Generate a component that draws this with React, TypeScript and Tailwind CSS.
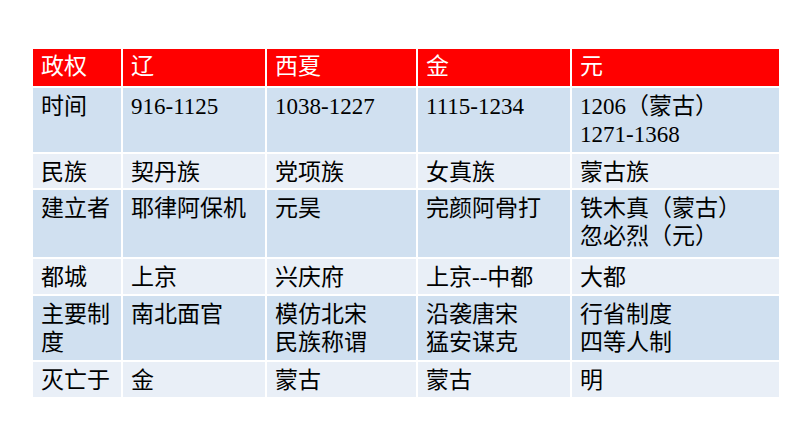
const rows: { bg: string; cells: string[][] }[] = [
  { bg: "bg-[#d0e0f0]", cells: [["时间"], ["916-1125"], ["1038-1227"], ["1115-1234"], ["1206（蒙古）", "1271-1368"]] },
  { bg: "bg-[#e9eff7]", cells: [["民族"], ["契丹族"], ["党项族"], ["女真族"], ["蒙古族"]] },
  { bg: "bg-[#d0e0f0]", cells: [["建立者"], ["耶律阿保机"], ["元昊"], ["完颜阿骨打"], ["铁木真（蒙古）", "忽必烈（元）"]] },
  { bg: "bg-[#e9eff7]", cells: [["都城"], ["上京"], ["兴庆府"], ["上京--中都"], ["大都"]] },
  { bg: "bg-[#d0e0f0]", cells: [["主要制", "度"], ["南北面官"], ["模仿北宋", "民族称谓"], ["沿袭唐宋", "猛安谋克"], ["行省制度", "四等人制"]] },
  { bg: "bg-[#e9eff7]", cells: [["灭亡于"], ["金"], ["蒙古"], ["蒙古"], ["明"]] },
];

const header = ["政权", "辽", "西夏", "金", "元"];

export default function App() {
  return (
    <div className="w-[794px] h-[447px] bg-white pt-[49px] pl-[33px] font-['Liberation_Serif','Noto_Sans_CJK_SC',serif] text-[23px] leading-[28px] text-black">
      <div className="grid w-fit grid-cols-[88px_142px_149px_152px_207px] grid-rows-[37px_64px_34px_67px_35px_64px_35px] gap-[2px] bg-white">
        {header.map((h) => (
          <div key={h} className="bg-[#ff0000] pl-[8px] pt-[4px] text-white">
            {h}
          </div>
        ))}
        {rows.map((row, i) =>
          row.cells.map((lines, j) => (
            <div key={`${i}-${j}`} className={`${row.bg} pl-[8px] pt-[5px]`}>
              {lines.map((line) => (
                <div key={line} className="whitespace-nowrap">
                  {line}
                </div>
              ))}
            </div>
          ))
        )}
      </div>
    </div>
  );
}
